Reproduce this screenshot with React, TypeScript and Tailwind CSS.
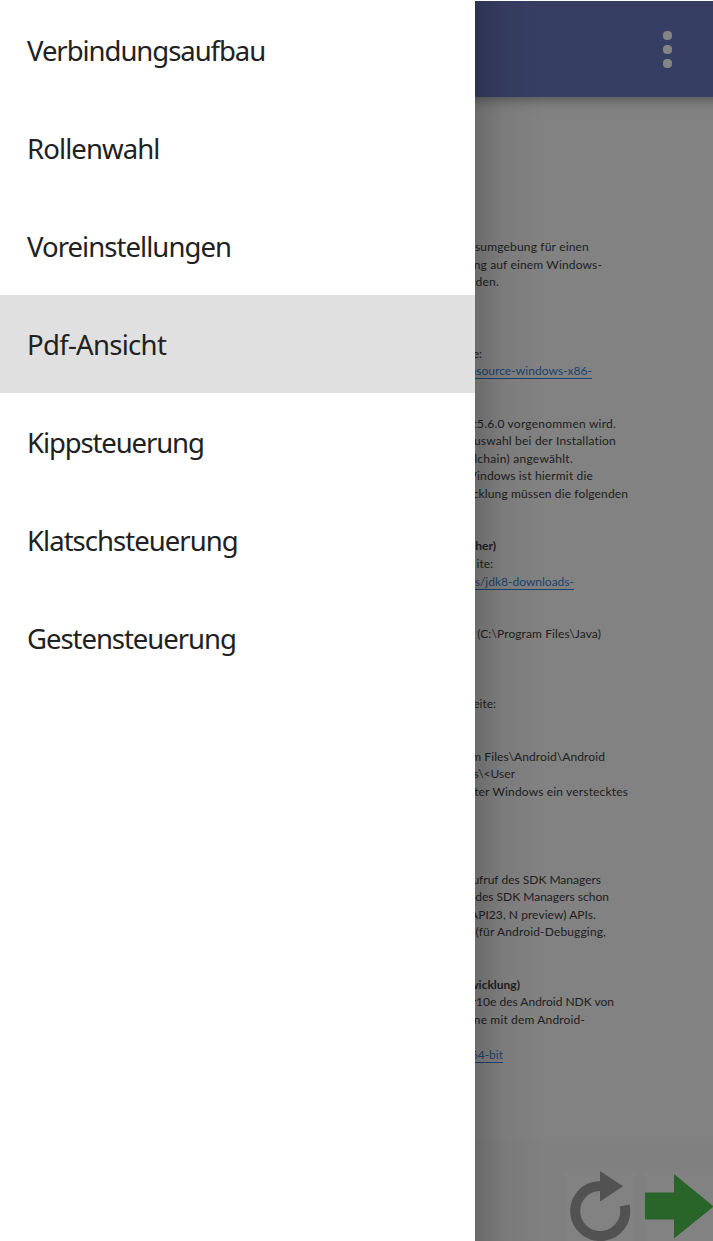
const items = [
  { label: 'Verbindungsaufbau', spacing: 'tracking-[-1.05px]' },
  { label: 'Rollenwahl', spacing: 'tracking-[-0.9px]' },
  { label: 'Voreinstellungen', spacing: 'tracking-[-0.95px]' },
  { label: 'Pdf-Ansicht', spacing: 'tracking-[-0.7px]', selected: true },
  { label: 'Kippsteuerung', spacing: 'tracking-[-1.12px]' },
  { label: 'Klatschsteuerung', spacing: 'tracking-[-0.97px]' },
  { label: 'Gestensteuerung', spacing: 'tracking-[-1.05px]' },
];

type Line = { text: string; width: number; bold?: boolean; link?: boolean; spacing?: string };

const gap = (n: number): Line[] => Array.from({ length: n }, () => ({ text: '', width: 0 }));

const intro: Line[] = [
  { text: 'sumgebung für einen', width: 114, spacing: 'tracking-[0.18px]' },
  { text: 'ng auf einem Windows-', width: 127, spacing: 'tracking-[0.15px]' },
  { text: 'den.', width: 24, spacing: 'tracking-[0.25px]' },
];

const body: Line[] = [
  { text: 'te:', width: 7 },
  { text: 'nsource-windows-x86-', width: 117, link: true, spacing: 'tracking-[0.05px]' },
  ...gap(2),
  { text: 't5.6.0 vorgenommen wird.', width: 141, spacing: 'tracking-[0.22px]' },
  { text: 'uswahl bei der Installation', width: 141, spacing: 'tracking-[0.2px]' },
  { text: 'lchain) angewählt.', width: 98, spacing: 'tracking-[0.27px]' },
  { text: 'Windows ist hiermit die', width: 118, spacing: 'tracking-[0.16px]' },
  { text: 'cklung müssen die folgenden', width: 153, spacing: 'tracking-[0.12px]' },
  ...gap(2),
  { text: 'her)', width: 21, bold: true },
  { text: 'ite:', width: 18 },
  { text: 's/jdk8-downloads-', width: 99, link: true },
  ...gap(2),
  { text: '(C:\\Program Files\\Java)', width: 126, spacing: 'tracking-[0.1px]' },
  ...gap(3),
  { text: 'eite:', width: 21 },
  ...gap(2),
  { text: 'm Files\\Android\\Android', width: 130, spacing: 'tracking-[0.1px]' },
  { text: 's\\<User', width: 40 },
  { text: 'ter Windows ein verstecktes', width: 153, spacing: 'tracking-[0.16px]' },
  ...gap(4),
  { text: 'ufruf des SDK Managers', width: 126 },
  { text: 'des SDK Managers schon', width: 134 },
  { text: 'API23, N preview) APIs.', width: 121, spacing: 'tracking-[0.06px]' },
  { text: '(für Android-Debugging,', width: 131, spacing: 'tracking-[0.15px]' },
  ...gap(2),
  { text: 'wicklung)', width: 45, bold: true },
  { text: 'r10e des Android NDK von', width: 139 },
  { text: 'ne mit dem Android-', width: 110, spacing: 'tracking-[0.15px]' },
  ...gap(1),
  { text: '64-bit', width: 28, link: true },
];

function Drawer() {
  return (
    <nav className="w-[475px] shrink-0 bg-white pt-px">
      {items.map((item) => (
        <div
          key={item.label}
          className={`flex h-[98px] items-center pt-px pl-[27px] ${item.selected ? 'bg-[#e0e0e0]' : ''}`}
        >
          <span className={`whitespace-nowrap text-[27.5px] leading-[38px] text-[#212121] ${item.spacing}`}>
            {item.label}
          </span>
        </div>
      ))}
    </nav>
  );
}

function Lines({ lines }: { lines: Line[] }) {
  return (
    <div className="flex flex-col">
      {lines.map((line, i) => (
        <div
          key={i}
          className="flex h-[17.54px] shrink-0 items-center justify-end overflow-hidden whitespace-nowrap leading-[17.54px]"
          style={{ width: line.width }}
        >
          <span
            className={`${line.spacing ?? ''} ${line.bold ? 'font-bold' : ''} ${line.link ? 'text-[#1b436d] underline decoration-1 underline-offset-[2.5px]' : ''}`}
          >
            {line.text}
          </span>
        </div>
      ))}
    </div>
  );
}

function Document() {
  return (
    <div className="flex h-[1042px] flex-col gap-[54px] bg-[#828282] pt-[141px] font-[Lato,sans-serif] text-[12px] text-[#202020] [font-variant-ligatures:none]">
      <Lines lines={intro} />
      <Lines lines={body} />
    </div>
  );
}

export default function App() {
  return (
    <div className="flex h-[1241px] w-[713px] overflow-hidden bg-white font-['Noto_Sans',sans-serif]">
      <Drawer />
      <main className="relative flex min-w-0 flex-1 flex-col overflow-hidden bg-[#828282] pt-px">
        <header className="z-10 -mx-4 flex h-24 shrink-0 items-center justify-end bg-[#363e64] pr-[57.5px] shadow-[0_2px_12px_rgba(0,0,0,0.4)]">
          <div className="flex flex-col gap-[5px]">
            <i className="size-[9px] rounded-[4px] bg-[#848484]" />
            <i className="size-[9px] rounded-[4px] bg-[#848484]" />
            <i className="size-[9px] rounded-[4px] bg-[#848484]" />
          </div>
        </header>
        <Document />
        <footer className="flex flex-1 items-end justify-end bg-[#808080]">
          <svg width="148" height="72" viewBox="565 1169 148 72">
            <path d="M565 1171h70v70h-70zM645 1171h68v70h-68z" fill="#828282" />
            <path d="M600 1186A25 25 0 1 0 624.6 1205.5" fill="none" stroke="#525252" strokeWidth="10" />
            <path d="M600 1171v30.5l23-15.3z" fill="#525252" />
            <path d="M645 1192.5h29V1174l39.5 32.5-39.5 32v-19h-29z" fill="#296529" />
          </svg>
        </footer>
        <div className="pointer-events-none absolute inset-y-0 left-0 z-20 w-[70px] bg-linear-to-r from-black/18 via-black/5 via-40% to-transparent" />
        <div className="absolute inset-x-0 top-0 z-30 h-px bg-white" />
      </main>
    </div>
  );
}
